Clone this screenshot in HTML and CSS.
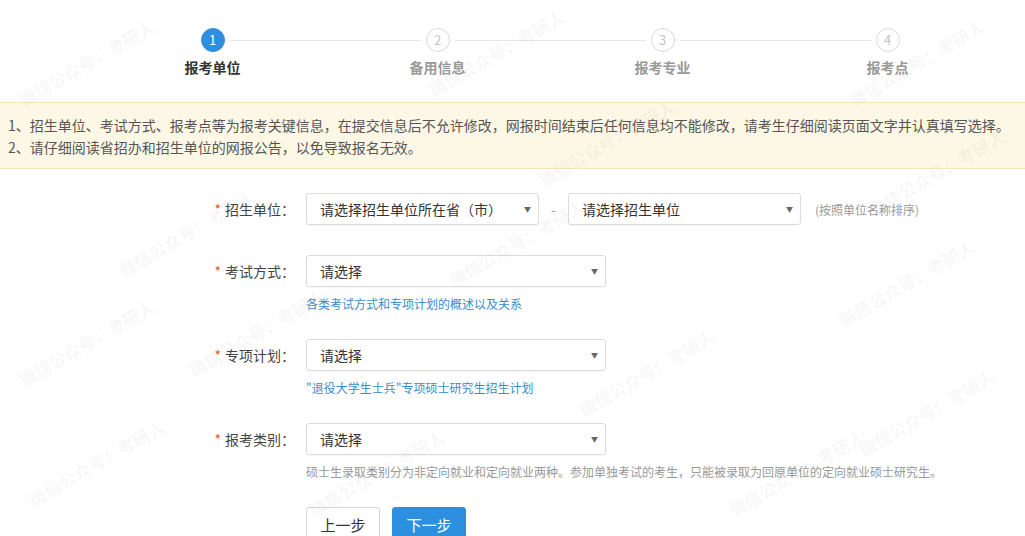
FILE: index.html
```html
<!DOCTYPE html>
<html lang="zh-CN">

<head>
  <meta charset="UTF-8">
  <title>报考单位</title>
  <link rel="stylesheet" href="styles.css">
</head>

<body>

  <div class="steps">
    <div class="step active">
      <span class="num">1</span>
      <p>报考单位</p>
    </div>
    <div class="step">
      <span class="num">2</span>
      <p>备用信息</p>
    </div>
    <div class="step">
      <span class="num">3</span>
      <p>报考专业</p>
    </div>
    <div class="step last">
      <span class="num">4</span>
      <p>报考点</p>
    </div>
  </div>

  <div class="notice">
    <p>1、招生单位、考试方式、报考点等为报考关键信息，在提交信息后不允许修改，网报时间结束后任何信息均不能修改，请考生仔细阅读页面文字并认真填写选择。</p>
    <p>2、请仔细阅读省招办和招生单位的网报公告，以免导致报名无效。</p>
  </div>

  <form class="form">
    <div class="row row-first">
      <label class="label"><i>*</i>招生单位：</label>
      <div class="field">
        <div class="line">
          <div class="select small"><span>请选择招生单位所在省（市）</span><b>▼</b></div>
          <span class="dash">-</span>
          <div class="select small"><span>请选择招生单位</span><b>▼</b></div>
          <span class="hint">(按照单位名称排序)</span>
        </div>
      </div>
    </div>

    <div class="row">
      <label class="label"><i>*</i>考试方式：</label>
      <div class="field">
        <div class="select"><span>请选择</span><b>▼</b></div>
        <a class="help" href="#">各类考试方式和专项计划的概述以及关系</a>
      </div>
    </div>

    <div class="row">
      <label class="label"><i>*</i>专项计划：</label>
      <div class="field">
        <div class="select"><span>请选择</span><b>▼</b></div>
        <a class="help" href="#">"退役大学生士兵"专项硕士研究生招生计划</a>
      </div>
    </div>

    <div class="row">
      <label class="label"><i>*</i>报考类别：</label>
      <div class="field">
        <div class="select"><span>请选择</span><b>▼</b></div>
        <p class="help gray">硕士生录取类别分为非定向就业和定向就业两种。参加单独考试的考生，只能被录取为回原单位的定向就业硕士研究生。</p>
      </div>
    </div>

    <div class="buttons">
      <button type="button" class="btn">上一步</button>
      <button type="button" class="btn primary">下一步</button>
    </div>
  </form>

  <div class="watermark">
    <span style="left:10px;top:50px">微信公众号：考研人</span>
    <span style="left:420px;top:40px">微信公众号：考研人</span>
    <span style="left:840px;top:50px">微信公众号：考研人</span>
    <span style="left:530px;top:130px">微信公众号：考研人</span>
    <span style="left:860px;top:160px">微信公众号：考研人</span>
    <span style="left:110px;top:220px">微信公众号：考研人</span>
    <span style="left:440px;top:230px">微信公众号：考研人</span>
    <span style="left:830px;top:270px">微信公众号：考研人</span>
    <span style="left:10px;top:330px">微信公众号：考研人</span>
    <span style="left:180px;top:320px">微信公众号：考研人</span>
    <span style="left:570px;top:360px">微信公众号：考研人</span>
    <span style="left:850px;top:400px">微信公众号：考研人</span>
    <span style="left:20px;top:450px">微信公众号：考研人</span>
    <span style="left:300px;top:460px">微信公众号：考研人</span>
    <span style="left:720px;top:460px">微信公众号：考研人</span>
  </div>
</body>

</html>
```

FILE: styles.css
```css
* {
  box-sizing: border-box;
}

body {
  margin: 0;
  font-family: "Noto Sans CJK SC", "Noto Sans", sans-serif;
  font-size: 14px;
  color: #333;
  background-color: #fff;
  position: relative;
  overflow: hidden;
  height: 536px;
}

p {
  margin: 0;
}

/* 步骤条 */
.steps {
  display: flex;
  padding-left: 100px;
  padding-top: 28px;
}

.step {
  width: 225px;
  position: relative;
  display: flex;
  flex-direction: column;
  align-items: center;
}

.step::after {
  content: "";
  position: absolute;
  top: 12px;
  left: calc(50% + 17px);
  right: calc(-50% + 17px);
  height: 1px;
  background-color: #e6e6e6;
}

.step.last::after {
  display: none;
}

.step .num {
  width: 24px;
  height: 24px;
  line-height: 22px;
  border-radius: 50%;
  border: 1px solid #d8d8d8;
  color: #c4c4c4;
  text-align: center;
  font-size: 13px;
  background-color: #fff;
}

.step p {
  margin-top: 5px;
  line-height: 20px;
  font-weight: bold;
  color: #999;
}

.step.active .num {
  background-color: #2f8ee0;
  border-color: #2f8ee0;
  color: #fff;
}

.step.active p {
  color: #333;
}

/* 提示 */
.notice {
  margin-top: 25px;
  padding: 11px 8px 10px;
  background-color: #fdf8e6;
  border-top: 1px solid #f5e7b9;
  border-bottom: 1px solid #f5e7b9;
  color: #555;
  line-height: 22px;
}

/* 表单 */
.form {
  padding-top: 24px;
}

.row {
  display: flex;
  margin-bottom: 26px;
}

.row-first {
  margin-bottom: 30px;
}

.label {
  width: 295px;
  text-align: right;
  line-height: 32px;
  color: #444;
}

.label i {
  font-style: normal;
  color: #e8572a;
  margin-right: 4px;
}

.field {
  margin-left: 11px;
}

.line {
  display: flex;
  align-items: center;
}

.select {
  width: 300px;
  height: 32px;
  border: 1px solid #dcdcdc;
  border-radius: 3px;
  padding: 0 7px 0 13px;
  display: flex;
  align-items: center;
  justify-content: space-between;
  color: #333;
  box-shadow: 0 1px 2px rgba(0, 0, 0, .04);
}

.select.small {
  width: 233px;
}

.select b {
  font-weight: normal;
  font-size: 7px;
  color: #666;
}

.dash {
  width: 29px;
  text-align: center;
  color: #999;
}

.hint {
  margin-left: 14px;
  font-size: 12px;
  color: #999;
}

.help {
  display: block;
  margin-top: 8px;
  font-size: 12px;
  line-height: 18px;
  color: #3a8ccc;
  text-decoration: none;
}

.help.gray {
  color: #999;
}

.buttons {
  display: flex;
  gap: 12px;
  padding-left: 306px;
  margin-top: 20px;
}

.btn {
  width: 74px;
  height: 34px;
  border: 1px solid #d6d6d6;
  border-radius: 3px;
  background-color: #fff;
  color: #333;
  font-family: inherit;
  font-size: 15px;
}

.btn.primary {
  background-color: #2d8fe0;
  border-color: #2d8fe0;
  color: #fff;
}

/* 水印 */
.watermark {
  position: absolute;
  left: 0;
  top: 0;
  width: 100%;
  height: 100%;
  pointer-events: none;
}

.watermark span {
  position: absolute;
  white-space: nowrap;
  font-size: 17px;
  font-weight: bold;
  color: rgba(0, 0, 0, .05);
  transform: rotate(-30deg);
}
```
